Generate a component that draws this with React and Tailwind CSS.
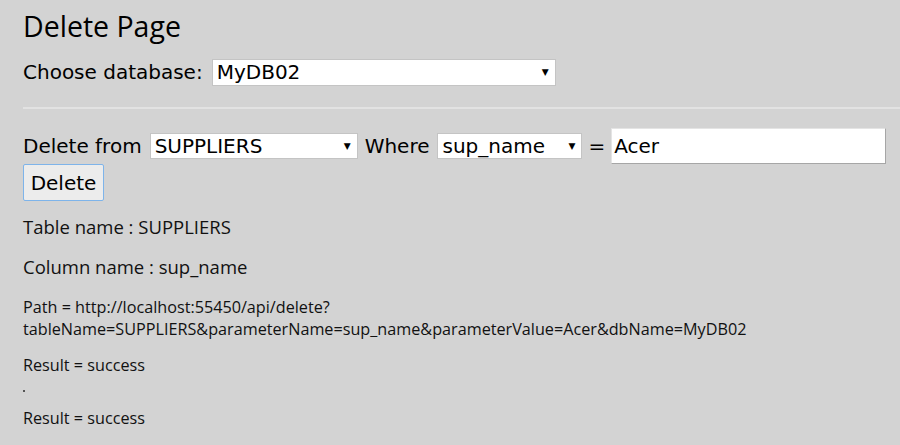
import { useState } from 'react';

const verdana = { fontFamily: '"DejaVu Sans", Verdana, sans-serif' };
const segoe = { fontFamily: '"Open Sans", "Noto Sans", sans-serif' };

const Select = ({ value, className }) => (
  <div
    className={`relative flex items-center bg-white border border-[#c4c4c4] pl-[4px] text-[20px] text-black ${className}`}
    style={verdana}
  >
    <span className="leading-none">{value}</span>
    <span className="absolute right-[6px] top-[8px] text-[9px] leading-none">▼</span>
  </div>
);

const App = () => {
  const [value] = useState('Acer');

  return (
    <div className="min-h-[445px] bg-[#d3d3d3] pl-[23px] pt-[7px] text-black overflow-hidden">
      <h1 className="text-[28.5px] leading-[38px]" style={segoe}>Delete Page</h1>

      <div className="flex items-center mt-[12px] gap-[9px]" style={verdana}>
        <span className="text-[20px]">Choose database:</span>
        <Select value="MyDB02" className="w-[344px] h-[27px]" />
      </div>

      <div className="mt-[20px] h-[2px] bg-[#e2e2e2]" />

      <div className="flex items-center mt-[19px] h-[36px]" style={verdana}>
        <span className="text-[20px] mr-[8px]">Delete from</span>
        <Select value="SUPPLIERS" className="w-[208px] h-[26px]" />
        <span className="text-[20px] ml-[7px] mr-[8px]">Where</span>
        <Select value="sup_name" className="w-[145px] h-[26px]" />
        <span className="text-[20px] ml-[6px] mr-[6px]">=</span>
        <div className="flex items-center w-[275px] h-[36px] bg-white border border-[#e4e4e4] border-r-[#a6a6a6] border-b-[#a6a6a6] px-[2px] text-[20px]">
          {value}
        </div>
      </div>

      <button
        className="h-[37px] w-[81px] border border-[#7eb4ea] bg-[#ececec] text-[20px] text-black rounded-[2px]"
        style={verdana}
      >
        Delete
      </button>

      <div style={segoe} className="text-[#111]">
        <p className="text-[18.5px] mt-[13px] leading-[26px]">Table name : SUPPLIERS</p>
        <p className="text-[18.5px] mt-[14px] leading-[26px]">Column name : sup_name</p>
        <p className="text-[16.2px] mt-[16px] leading-[22px] w-[800px]">
          Path = http://localhost:55450/api/delete?
          <br />
          tableName=SUPPLIERS&amp;parameterName=sup_name&amp;parameterValue=Acer&amp;dbName=MyDB02
        </p>
        <p className="text-[16.2px] mt-[14px] leading-[22px]">Result = success</p>
        <div className="mt-[14px] w-[2px] h-[2px] bg-[#555]" />
        <p className="text-[16.2px] mt-[15px] leading-[22px]">Result = success</p>
      </div>
    </div>
  );
};

export default App;
